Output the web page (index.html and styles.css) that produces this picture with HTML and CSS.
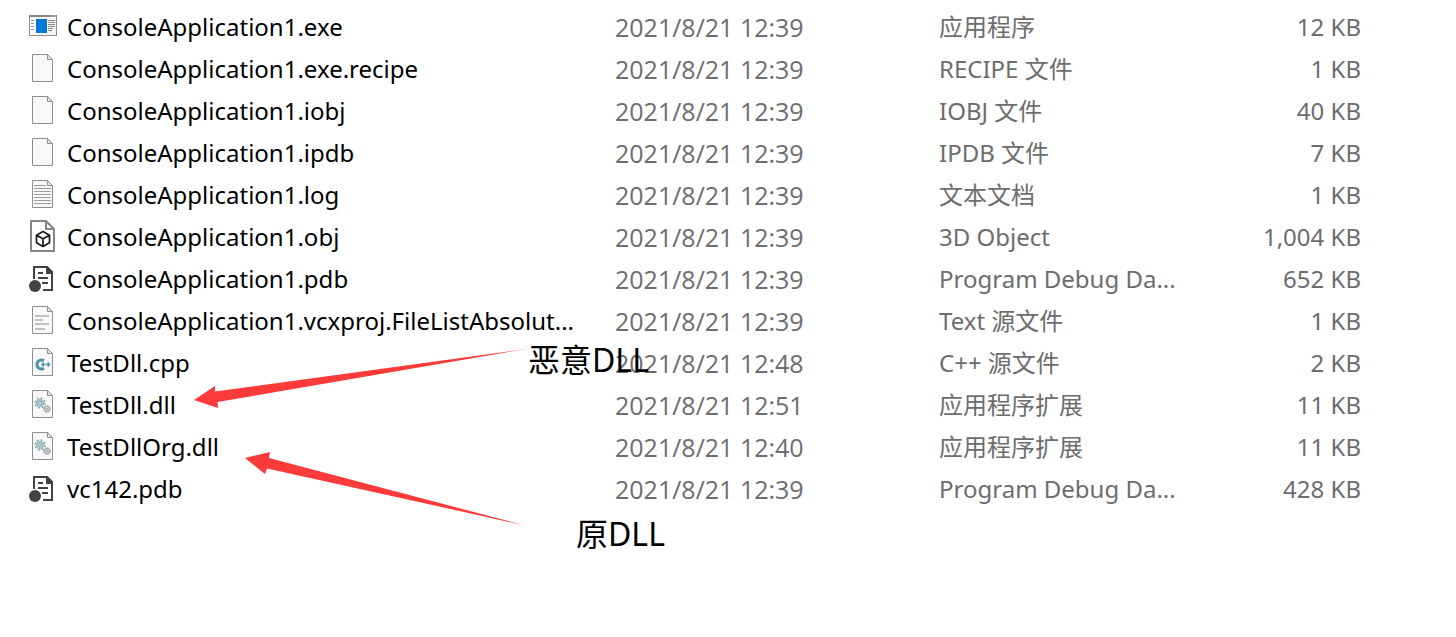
FILE: index.html
```html
<!DOCTYPE html>
<html lang="zh-CN">
<head>
<meta charset="utf-8">
<title>ConsoleApplication1</title>
<link rel="stylesheet" href="styles.css">
</head>
<body>
<svg class="defs" aria-hidden="true">
  <defs>
    <symbol id="exe" viewBox="0 0 28 32">
      <rect x=".5" y="5.5" width="27" height="20" fill="#f5f5f5" stroke="#8e8e8e"/>
      <path d="M0 5h28v2H0z" fill="#858585"/>
      <path d="M22 6h1m1 0h1m1 0h1" stroke="#ddd"/>
      <path d="M1 8h5v17H1z" fill="#fff"/>
      <path d="M2 10.500h3M2 13.500h3M2 16.500h3M2 19.500h3M19 10.500h7M19 12.500h7M19 14.500h7M19 16.500h7M19 18.500h5M19 20.500h4" stroke="#8b8b8b"/>
      <path d="M7 9h11v14H7z" fill="#0078d7"/>
    </symbol>
    <symbol id="page" viewBox="0 0 28 32">
      <path d="M3.500 2.500h15l5 5v22h-20z" fill="#f8f8f8" stroke="#8f8f8f"/>
      <path d="M18.500 2.500v5h5z" fill="#e4e4e4" stroke="#8f8f8f"/>
    </symbol>
    <symbol id="log" viewBox="0 0 28 32">
      <use href="#page"/>
      <path d="M5 7.500h12M5 10.500h17M5 13.500h17M5 16.500h17M5 19.500h17M5 22.500h17M5 25.500h17" stroke="#9c9c9c"/>
    </symbol>
    <symbol id="obj" viewBox="0 0 28 32">
      <path d="M2 1h15l8 8v22H2z" fill="#fff" stroke="#858585" stroke-width="2"/>
      <path d="M17 1v8h8" fill="none" stroke="#858585" stroke-width="2"/>
      <path d="M14 11.500l6.500 3.700v7.500L14 26.500l-6.500-3.800v-7.500zM7.500 15.200l6.500 3.600 6.500-3.600M14 18.800v7.500" fill="none" stroke="#1b1b1b" stroke-width="1.700" stroke-linejoin="round"/>
    </symbol>
    <symbol id="pdb" viewBox="0 0 28 32">
      <path d="M5 17V5h13l5 5v18h-9" fill="#fff" stroke="#424242" stroke-width="2"/>
      <path d="M17 4h1l6 6v2h-7z" fill="#424242"/>
      <path d="M9 11h5M9 16h10M13 21h6" stroke="#424242" stroke-width="2"/>
      <circle cx="6" cy="24" r="6" fill="#424242"/>
    </symbol>
    <symbol id="txt" viewBox="0 0 28 32">
      <use href="#page"/>
      <path d="M6 12h14M6 16h8M6 20h14M6 25h10" stroke="#bcc1c4" stroke-width="2"/>
    </symbol>
    <symbol id="cpp" viewBox="0 0 28 32">
      <use href="#page"/>
      <path d="M15 14.800a4.500 4.500 0 1 0 0 7.400" fill="none" stroke="#4f93ab" stroke-width="3"/>
      <path d="M12 18.500h4.500M14.300 16.200v4.600M17 18.500h4.500M19.300 16.200v4.600" stroke="#4f93ab" stroke-width="1.500"/>
    </symbol>
    <symbol id="dll" viewBox="0 0 28 32">
      <use href="#page"/>
      <circle cx="11" cy="15" r="5" fill="none" stroke="#8da5ab" stroke-width="1.500" stroke-dasharray="1.960 1.960"/>
      <circle cx="11" cy="15" r="3.300" fill="#d3e5e9" stroke="#9ab8bf" stroke-width="1.500"/>
      <circle cx="11" cy="15" r="1.500" fill="#fff" stroke="#7b9298"/>
      <circle cx="18" cy="21" r="3.500" fill="none" stroke="#8c979c" stroke-dasharray="1.370 1.370"/>
      <circle cx="18" cy="21" r="2.500" fill="#dde3e5" stroke="#8c979c"/>
      <circle cx="18" cy="21" r=".8" fill="#6f797d"/>
    </symbol>
  </defs>
</svg>
<main class="explorer">
  <table class="files">
    <colgroup><col class="col-name"><col class="col-date"><col class="col-type"><col></colgroup>
    <tbody>
      <tr><td><div class="name"><svg class="icon"><use href="#exe"/></svg>ConsoleApplication1.exe</div></td><td class="date">2021/8/21 12:39</td><td>应用程序</td><td class="size">12 KB</td></tr>
      <tr><td><div class="name"><svg class="icon"><use href="#page"/></svg>ConsoleApplication1.exe.recipe</div></td><td class="date">2021/8/21 12:39</td><td>RECIPE 文件</td><td class="size">1 KB</td></tr>
      <tr><td><div class="name"><svg class="icon"><use href="#page"/></svg>ConsoleApplication1.iobj</div></td><td class="date">2021/8/21 12:39</td><td>IOBJ 文件</td><td class="size">40 KB</td></tr>
      <tr><td><div class="name"><svg class="icon"><use href="#page"/></svg>ConsoleApplication1.ipdb</div></td><td class="date">2021/8/21 12:39</td><td>IPDB 文件</td><td class="size">7 KB</td></tr>
      <tr><td><div class="name"><svg class="icon"><use href="#log"/></svg>ConsoleApplication1.log</div></td><td class="date">2021/8/21 12:39</td><td>文本文档</td><td class="size">1 KB</td></tr>
      <tr><td><div class="name"><svg class="icon"><use href="#obj"/></svg>ConsoleApplication1.obj</div></td><td class="date">2021/8/21 12:39</td><td>3D Object</td><td class="size">1,004 KB</td></tr>
      <tr><td><div class="name"><svg class="icon"><use href="#pdb"/></svg>ConsoleApplication1.pdb</div></td><td class="date">2021/8/21 12:39</td><td>Program Debug Da...</td><td class="size">652 KB</td></tr>
      <tr><td><div class="name"><svg class="icon"><use href="#txt"/></svg>ConsoleApplication1.vcxproj.FileListAbsolut...</div></td><td class="date">2021/8/21 12:39</td><td>Text 源文件</td><td class="size">1 KB</td></tr>
      <tr><td><div class="name"><svg class="icon"><use href="#cpp"/></svg>TestDll.cpp</div></td><td class="date">2021/8/21 12:48</td><td>C++ 源文件</td><td class="size">2 KB</td></tr>
      <tr><td><div class="name"><svg class="icon"><use href="#dll"/></svg>TestDll.dll</div></td><td class="date">2021/8/21 12:51</td><td>应用程序扩展</td><td class="size">11 KB</td></tr>
      <tr><td><div class="name"><svg class="icon"><use href="#dll"/></svg>TestDllOrg.dll</div></td><td class="date">2021/8/21 12:40</td><td>应用程序扩展</td><td class="size">11 KB</td></tr>
      <tr><td><div class="name"><svg class="icon"><use href="#pdb"/></svg>vc142.pdb</div></td><td class="date">2021/8/21 12:39</td><td>Program Debug Da...</td><td class="size">428 KB</td></tr>
    </tbody>
  </table>
  <svg class="arrows" width="560" height="560" aria-hidden="true">
    <path d="M194 400L215 386V391.500L526 349L217.500 402L218 408Z"/>
    <path d="M245 458L270 452L269 458L523 525L267 468.500L265 474Z"/>
  </svg>
  <span class="note note-malicious">恶意DLL</span>
  <span class="note note-original">原DLL</span>
</main>
</body>
</html>
```
FILE: styles.css
```css
body {
  margin: 0;
  background: #fff;
  color: #000;
  font-family: "Noto Sans", "Noto Sans CJK SC", sans-serif;
  font-size: 24px;
}

.defs {
  position: absolute;
  width: 0;
  height: 0;
}

.explorer {
  position: relative;
  box-sizing: border-box;
  min-height: 100vh;
  padding: 6px 95px 0 29px;
}

.files {
  width: 100%;
  table-layout: fixed;
  border-collapse: collapse;
  white-space: nowrap;
}

.col-name { width: 586px; }
.col-date { width: 324px; }
.col-type { width: 250px; }

.files td {
  height: 42px;
  padding: 0;
  line-height: 40px;
  color: #6d6d6d;
}

.files .date {
  font-family: "Open Sans", sans-serif;
  font-size: 25px;
}

.files .size {
  text-align: right;
}

.name {
  display: flex;
  align-items: center;
  gap: 10px;
  color: #000;
}

.icon {
  flex: none;
  width: 28px;
  height: 32px;
  padding-bottom: 2px;
}

.arrows {
  position: absolute;
  top: 0;
  left: 0;
  fill: #fb3a3a;
}

.note {
  position: absolute;
  font-size: 32px;
  line-height: 40px;
}

.note-malicious {
  top: 340px;
  left: 528px;
}

.note-original {
  top: 514px;
  left: 576px;
}
```
